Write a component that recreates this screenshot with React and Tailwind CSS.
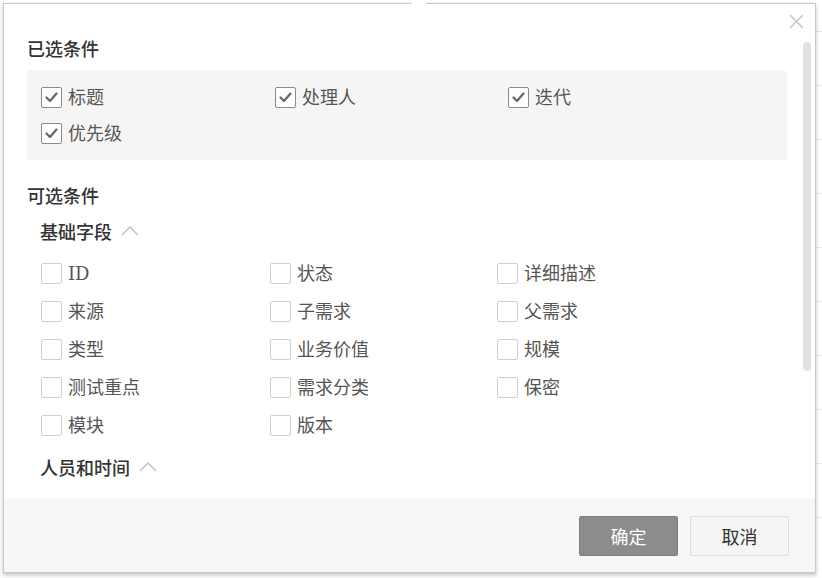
const FONT = { fontFamily: '"DejaVu Serif", "Noto Sans CJK SC", sans-serif' };

const SELECTED = ['标题', '处理人', '迭代', '优先级'];
const BASIC = ['ID', '状态', '详细描述', '来源', '子需求', '父需求', '类型', '业务价值', '规模', '测试重点', '需求分类', '保密', '模块', '版本'];

function Chevron() {
  return (
    <svg width="20" height="12" viewBox="0 0 20 12" fill="none" stroke="#bdbdbd" strokeWidth="1.3">
      <polyline points="2,10 10,2 18,10" />
    </svg>
  );
}

function Box({ checked }) {
  return checked ? (
    <span className="flex h-[21px] w-[21px] items-center justify-center rounded-[2px] border border-[#8a8a8a] bg-white">
      <svg width="15" height="15" viewBox="0 0 15 15" fill="none" stroke="#666" strokeWidth="2.2" strokeLinecap="round" strokeLinejoin="round">
        <polyline points="2.5,7.5 6,11 12.5,3.5" />
      </svg>
    </span>
  ) : (
    <span className="h-[21px] w-[21px] rounded-[2px] border border-[#cfcfcf] bg-white" />
  );
}

function Item({ label, checked }) {
  return (
    <div className="flex items-center gap-[6px] text-[18px] text-[#555]" style={FONT}>
      <Box checked={checked} />
      <span>{label}</span>
    </div>
  );
}

export default function App() {
  return (
    <div className="flex h-[578px] w-[822px] overflow-hidden bg-white font-['Noto_Sans_CJK_SC',sans-serif]">
      <div className="relative ml-[3px] mt-[3px] flex h-[570px] w-[813px] shrink-0 flex-col border border-[#c8c8c8] bg-white shadow-[0_2px_4px_rgba(0,0,0,0.25)]">
        <div className="absolute left-[408px] top-[-2px] h-[3px] w-[14px] bg-white" />
        <div className="flex h-[31px] justify-end pr-[11px] pt-[10px]">
          <svg width="15" height="15" viewBox="0 0 15 15" stroke="#c6c6c6" strokeWidth="1.5">
            <line x1="1" y1="1" x2="14" y2="14" />
            <line x1="14" y1="1" x2="1" y2="14" />
          </svg>
        </div>
        <div className="flex min-h-0 flex-1">
          <div className="flex-1 overflow-hidden pl-[23px]">
            <div className="h-[26px] text-[18px] font-medium leading-[26px] text-[#333]">已选条件</div>
            <div className="mt-[9px] w-[760px] rounded-[4px] bg-[#f5f5f5] px-[14px] py-[9px]">
              <div className="grid grid-cols-[234px_233px_1fr]">
                {SELECTED.map(s => (
                  <div key={s} className="flex h-[36px] items-center">
                    <Item label={s} checked />
                  </div>
                ))}
              </div>
            </div>
            <div className="mt-[22px] h-[26px] text-[18px] font-medium leading-[26px] text-[#333]">可选条件</div>
            <div className="pl-[13px]">
              <div className="mt-[10px] flex h-[26px] items-center gap-[8px] text-[18px] font-medium text-[#333]">
                基础字段 <Chevron />
              </div>
              <div className="mt-[10px] grid grid-cols-[229px_227px_1fr] pl-[1px]">
                {BASIC.map(s => (
                  <div key={s} className="flex h-[38px] items-center">
                    <Item label={s} />
                  </div>
                ))}
              </div>
              <div className="mt-[10px] flex h-[26px] items-center gap-[8px] text-[18px] font-medium text-[#333]">
                人员和时间 <Chevron />
              </div>
            </div>
          </div>
          <div className="w-[20px] pl-[8px] pt-[7px]">
            <div className="h-[329px] w-[8px] rounded-full bg-[#e1e1e1]" />
          </div>
        </div>
        <div className="flex h-[73px] justify-end gap-[12px] bg-[#f7f7f7] pr-[26px] pt-[17px]">
          <button className="h-[40px] w-[99px] rounded-[2px] border border-[#7d7d7d] bg-[#8c8c8c] text-[18px] text-white">确定</button>
          <button className="h-[40px] w-[99px] rounded-[2px] border border-[#dcdcdc] bg-[#f5f5f5] text-[18px] text-[#333]">取消</button>
        </div>
      </div>
      <div className="flex-1">
        {[0, 1, 2, 3, 4, 5, 6, 7, 8, 9].map(i => (
          <div key={i} className={i === 0 ? 'h-[32px] border-b border-[#e4e4e4]' : 'h-[54px] border-b border-[#ececec]'} />
        ))}
      </div>
    </div>
  );
}
